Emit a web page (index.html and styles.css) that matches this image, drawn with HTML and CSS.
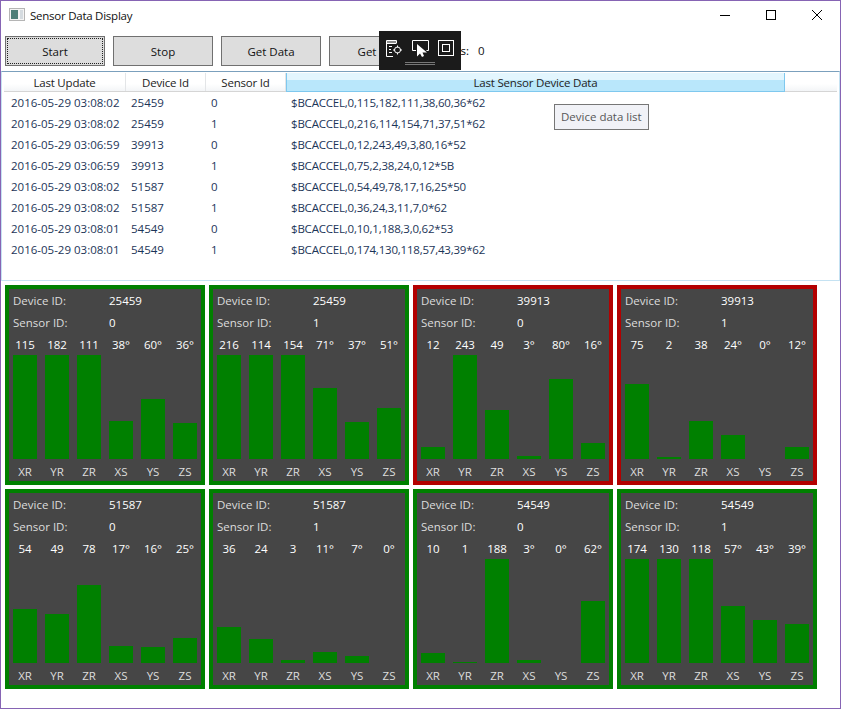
FILE: index.html
```html
<!DOCTYPE html>
<html>
<head>
    <meta charset="utf-8">
    <title>Sensor Data Display</title>
    <link rel="stylesheet" href="styles.css">
</head>
<body>
    <div class="window">
        <div class="titlebar">
            <svg class="app-icon" width="16" height="16" viewBox="0 0 16 16">
                <rect x="0.5" y="1.5" width="15" height="12" fill="#f4f4f4" stroke="#b5b5b5"/>
                <rect x="2" y="3" width="7" height="9" fill="#4f7f78"/>
                <rect x="11" y="3" width="3" height="9" fill="#d5dbe0"/>
            </svg>
            <span class="title">Sensor Data Display</span>
            <div class="controls">
                <svg width="12" height="12" viewBox="0 0 12 12"><path d="M1 6.5H11" stroke="#000" fill="none"/></svg>
                <svg width="12" height="12" viewBox="0 0 12 12"><rect x="1.5" y="1.5" width="9" height="9" stroke="#000" fill="none"/></svg>
                <svg width="12" height="12" viewBox="0 0 12 12"><path d="M1 1L11 11M11 1L1 11" stroke="#000" fill="none"/></svg>
            </div>
        </div>

        <div class="toolbar">
            <button class="btn focused"><span>Start</span></button>
            <button class="btn">Stop</button>
            <button class="btn">Get Data</button>
            <button class="btn">Get Info</button>
            <span class="count-label">Errors:</span>
            <span class="count">0</span>
        </div>

        <div class="debug-bar">
            <div class="debug-icons">
                <svg width="17" height="17" viewBox="0 0 17 17" fill="none" stroke="#fff">
                    <path d="M10.5 3V0.5H0.5V16.5H7"/>
                    <path d="M0.5 2H10.5M0.5 3.5H10.5"/>
                    <path d="M3 6.5H6M3 9.5H5M3 12.5H6"/>
                    <circle cx="11.5" cy="10" r="3"/>
                    <path d="M11.5 5.5V7.5M11.5 12.5V14.5M7 10H9M14 10H16"/>
                </svg>
                <svg width="17" height="17" viewBox="0 0 17 17" fill="none" stroke="#fff">
                    <path d="M4 10.5H0.5V0.5H16.5V10.5H14.5"/>
                    <path d="M5 4V16.5L8 13.5L10 17L12 16L10.5 12.5L15 12.5Z" fill="#fff" stroke="none"/>
                </svg>
                <svg width="16" height="16" viewBox="0 0 16 16" fill="none" stroke="#fff">
                    <rect x="0.5" y="0.5" width="15" height="15"/>
                    <rect x="4.5" y="4.5" width="7" height="7"/>
                </svg>
            </div>
            <div class="debug-grip"></div>
        </div>

        <div class="list">
            <div class="list-head">
                <div class="col-a">Last Update</div>
                <div class="col-b">Device Id</div>
                <div class="col-c">Sensor Id</div>
                <div class="col-d hot">Last Sensor Device Data</div>
            </div>
            <div class="list-rows" id="rows"></div>
            <div class="tooltip">Device data list</div>
        </div>

        <div class="cards" id="cards"></div>
    </div>

    <script src="app.js"></script>
</body>
</html>
```

FILE: styles.css
```css
* {
    box-sizing: border-box;
}
html, body {
    margin: 0;
    height: 100%;
}
body {
    font-family: "Open Sans", "Liberation Sans", sans-serif;
    font-size: 11.5px;
    color: #000;
    background-color: #fff;
}
.window {
    position: relative;
    height: 709px;
    border: 1px solid #8664b4;
    overflow: hidden;
}
.titlebar {
    display: flex;
    align-items: center;
    height: 30px;
    padding: 0 0 2px 8px;
}
.title {
    margin-left: 5px;
    color: #111;
    letter-spacing: -0.25px;
}
.controls {
    display: flex;
    gap: 34px;
    margin-left: auto;
    padding-right: 17px;
}
.toolbar {
    display: flex;
    align-items: flex-start;
    gap: 8px;
    height: 40px;
    padding: 5px 0 0 4px;
}
.btn {
    width: 100px;
    height: 30px;
    padding: 0;
    font: inherit;
    color: #111;
    background-color: #ddd;
    border: 1px solid #707070;
}
.btn.focused {
    padding: 1px;
}
.btn.focused span {
    display: flex;
    align-items: center;
    justify-content: center;
    height: 100%;
    border: 1px dotted #222;
}
.count-label {
    margin-left: -4px;
    width: 40px;
    line-height: 30px;
}
.count {
    color: #111;
    margin-left: -3px;
    line-height: 30px;
}
.debug-bar {
    position: absolute;
    left: 378px;
    top: 30px;
    width: 82px;
    height: 39px;
    background-color: #1b1b1b;
}
.debug-icons {
    display: flex;
    gap: 9px;
    padding: 9px 0 0 7px;
}
.debug-grip {
    width: 30px;
    height: 3px;
    margin: 5px auto 0;
    border-top: 1px solid #777;
    border-bottom: 1px solid #777;
}
.list {
    position: relative;
    height: 210px;
    border-top: 1px solid #7ba0bd;
    border-left: 1px solid #c5e2f2;
    border-right: 1px solid #c5e2f2;
    border-bottom: 1px solid #c5e2f2;
    padding-top: 1px;
}
.list-head {
    display: flex;
    height: 19px;
    margin: 0 2px;
    border-bottom: 1px solid #d5d5d5;
    color: #222;
    letter-spacing: -0.2px;
    background: linear-gradient(#fff, #fff 60%, #f3f5f7);
}
.list-head div {
    text-align: center;
    line-height: 20px;
    border-right: 1px solid #e3e5e7;
}
.col-a { width: 122px; }
.col-b { width: 80px; }
.col-c { width: 80px; }
.col-d { width: 499px; }
.list-head .hot {
    border-right: 1px solid #7fc8ee;
    border-left: 1px solid #7fc8ee;
    border-bottom: 1px solid #7fc8ee;
    height: 19px;
    background: linear-gradient(#e3f6fe, #e3f6fe 40%, #b9e7fb 40%, #b9e7fb);
}
.row {
    display: flex;
    height: 21px;
    align-items: center;
    margin-left: 2px;
    color: #1c3558;
}
.row div {
    padding-left: 5px;
}
.row .col-a {
    padding-left: 7px;
}
.row .col-d {
    letter-spacing: -0.2px;
}
.tooltip {
    position: absolute;
    left: 552px;
    top: 32px;
    height: 26px;
    padding: 4px 6px 0;
    color: #575757;
    background-color: #f1f2f7;
    border: 1px solid #767676;
}
.cards {
    display: grid;
    grid-template-columns: repeat(4, 200px);
    grid-auto-rows: 200px;
    gap: 4px;
    padding: 4px;
}
.card {
    padding: 0 4px;
    color: #ddd;
    background-color: #464646;
    border: 4px solid #008000;
}
.card.bad {
    border-color: #b30000;
}
.info {
    display: flex;
    height: 22px;
    align-items: center;
}
.info-label {
    width: 96px;
}
.info-value {
    color: #fff;
}
.readings, .bars, .axes {
    display: flex;
    gap: 8px;
}
.readings {
    height: 22px;
    align-items: center;
    color: #fff;
}
.reading, .axis {
    width: 24px;
    text-align: center;
    white-space: nowrap;
}
.bars {
    height: 104px;
    align-items: flex-end;
}
.bar {
    width: 24px;
    background-color: #008000;
}
.axes {
    height: 24px;
    align-items: center;
    padding-top: 1px;
}
```

FILE: app.js
```js
// Each sensor row: time, device, sensor, raw message
var rows = [
    ['2016-05-29 03:08:02', '25459', '0', '$BCACCEL,0,115,182,111,38,60,36*62'],
    ['2016-05-29 03:08:02', '25459', '1', '$BCACCEL,0,216,114,154,71,37,51*62'],
    ['2016-05-29 03:06:59', '39913', '0', '$BCACCEL,0,12,243,49,3,80,16*52'],
    ['2016-05-29 03:06:59', '39913', '1', '$BCACCEL,0,75,2,38,24,0,12*5B'],
    ['2016-05-29 03:08:02', '51587', '0', '$BCACCEL,0,54,49,78,17,16,25*50'],
    ['2016-05-29 03:08:02', '51587', '1', '$BCACCEL,0,36,24,3,11,7,0*62'],
    ['2016-05-29 03:08:01', '54549', '0', '$BCACCEL,0,10,1,188,3,0,62*53'],
    ['2016-05-29 03:08:01', '54549', '1', '$BCACCEL,0,174,130,118,57,43,39*62']
];
var late = ['39913'];
var axes = ['XR', 'YR', 'ZR', 'XS', 'YS', 'ZS'];
var MAX_BAR = 104;

var rowsHtml = '';
var cardsHtml = '';
rows.forEach(function(r) {
    rowsHtml += '<div class="row"><div class="col-a">' + r[0] + '</div><div class="col-b">' + r[1] +
        '</div><div class="col-c">' + r[2] + '</div><div class="col-d">' + r[3] + '</div></div>';

    var values = r[3].split('*')[0].split(',').slice(2).map(Number);
    var readings = '', bars = '', labels = '';
    values.forEach(function(v, i) {
        readings += '<div class="reading">' + v + (i > 2 ? '°' : '') + '</div>';
        bars += '<div class="bar" style="height:' + Math.min(v, MAX_BAR) + 'px"></div>';
        labels += '<div class="axis">' + axes[i] + '</div>';
    });
    cardsHtml += '<div class="card' + (late.indexOf(r[1]) > -1 ? ' bad' : '') + '">' +
        '<div class="info"><div class="info-label">Device ID:</div><div class="info-value">' + r[1] + '</div></div>' +
        '<div class="info"><div class="info-label">Sensor ID:</div><div class="info-value">' + r[2] + '</div></div>' +
        '<div class="readings">' + readings + '</div>' +
        '<div class="bars">' + bars + '</div>' +
        '<div class="axes">' + labels + '</div></div>';
});
document.getElementById('rows').innerHTML = rowsHtml;
document.getElementById('cards').innerHTML = cardsHtml;
```
